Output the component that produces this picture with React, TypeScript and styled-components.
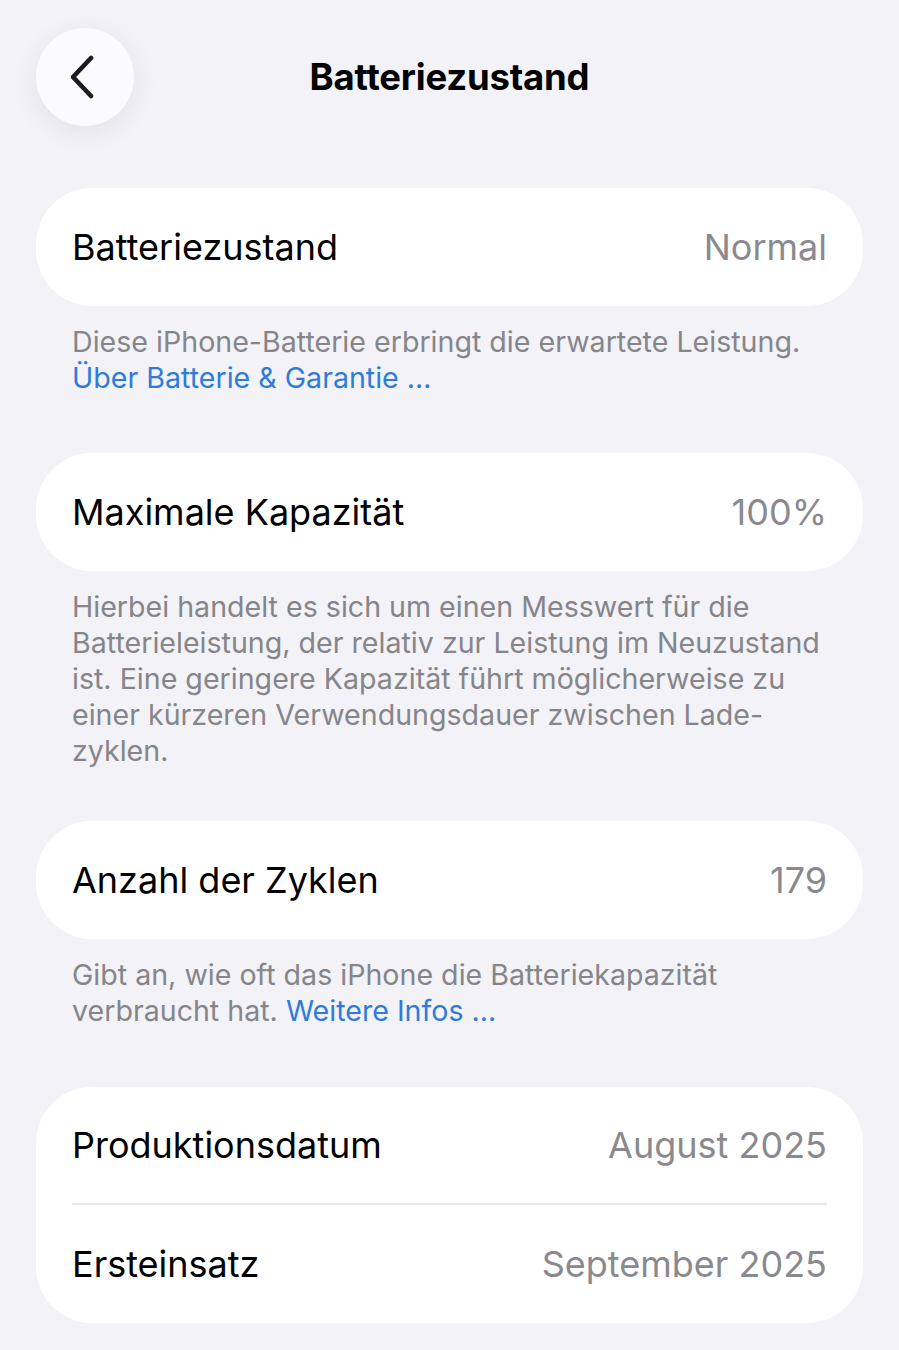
import React from "react";
import styled, { createGlobalStyle } from "styled-components";

const GlobalStyle = createGlobalStyle`
  html, body {
    margin: 0;
    padding: 0;
    background: #f2f2f7;
  }
  body {
    font-family: Inter, "Noto Sans", "Liberation Sans", sans-serif;
    -webkit-font-smoothing: antialiased;
  }
`;

const Page = styled.div`
  width: 899px;
  min-height: 1350px;
  box-sizing: border-box;
  background: #f2f2f7;
  padding: 28px 36px 0 36px;
  display: flex;
  flex-direction: column;
`;

const Header = styled.header`
  position: relative;
  height: 98px;
  display: flex;
  align-items: center;
  justify-content: center;
  margin-bottom: 62px;
`;

const BackButton = styled.button`
  position: absolute;
  left: 0;
  top: 0;
  width: 98px;
  height: 98px;
  border-radius: 50%;
  border: none;
  background: #fbfbfd;
  box-shadow: 0 6px 28px rgba(0, 0, 0, 0.07);
  display: flex;
  align-items: center;
  justify-content: center;
  padding: 0;
  cursor: pointer;
`;

const Title = styled.h1`
  margin: 0;
  font-size: 36.5px;
  font-weight: 650;
  color: #000;
  letter-spacing: -0.2px;
`;

const Card = styled.section`
  background: #fff;
  border-radius: 56px;
  padding: 0 36px;
  display: flex;
  flex-direction: column;
`;

const Row = styled.div<{ $h?: number }>`
  height: ${(p) => p.$h ?? 118}px;
  display: flex;
  align-items: center;
  justify-content: space-between;
  font-size: 36px;
`;

const Divider = styled.div`
  height: 2px;
  background: #e5e5ea;
`;

const Label = styled.span`
  color: #000;
`;

const Value = styled.span`
  color: #8a8a8e;
`;

const Footnote = styled.p`
  margin: 18px 36px 0 36px;
  font-size: 28.6px;
  line-height: 36px;
  color: #85858a;
`;

const Link = styled.a`
  color: #2f7bdc;
  text-decoration: none;
`;

const Gap = styled.div<{ $h: number }>`
  height: ${(p) => p.$h}px;
`;

const Chevron = () => (
  <svg width="28" height="46" viewBox="0 0 28 46" fill="none">
    <path
      d="M20 4 L2 23 L20 42"
      stroke="#1c1c1e"
      strokeWidth="4.6"
      strokeLinecap="round"
      strokeLinejoin="round"
    />
  </svg>
);

export default function App() {
  return (
    <>
      <GlobalStyle />
      <Page>
        <Header>
          <BackButton aria-label="Zurück">
            <Chevron />
          </BackButton>
          <Title>Batteriezustand</Title>
        </Header>

        <Card>
          <Row>
            <Label>Batteriezustand</Label>
            <Value>Normal</Value>
          </Row>
        </Card>
        <Footnote>
          Diese iPhone-Batterie erbringt die erwartete Leistung.
          <br />
          <Link href="#">Über Batterie &amp; Garantie …</Link>
        </Footnote>

        <Gap $h={57} />
        <Card>
          <Row>
            <Label>Maximale Kapazität</Label>
            <Value>100%</Value>
          </Row>
        </Card>
        <Footnote>
          Hierbei handelt es sich um einen Messwert für die
          <br />
          Batterieleistung, der relativ zur Leistung im Neuzustand
          <br />
          ist. Eine geringere Kapazität führt möglicherweise zu
          <br />
          einer kürzeren Verwendungsdauer zwischen Lade-
          <br />
          zyklen.
        </Footnote>

        <Gap $h={52} />
        <Card>
          <Row>
            <Label>Anzahl der Zyklen</Label>
            <Value>179</Value>
          </Row>
        </Card>
        <Footnote>
          Gibt an, wie oft das iPhone die Batteriekapazität
          <br />
          verbraucht hat. <Link href="#">Weitere Infos …</Link>
        </Footnote>

        <Gap $h={58} />
        <Card>
          <Row $h={116}>
            <Label>Produktionsdatum</Label>
            <Value>August 2025</Value>
          </Row>
          <Divider />
          <Row $h={118}>
            <Label>Ersteinsatz</Label>
            <Value>September 2025</Value>
          </Row>
        </Card>
      </Page>
    </>
  );
}
